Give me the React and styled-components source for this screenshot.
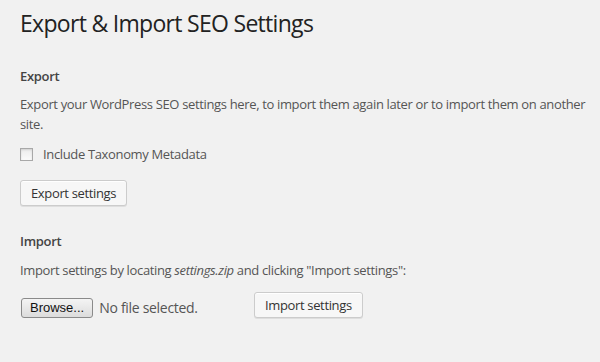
import React from 'react';
import styled, { createGlobalStyle } from 'styled-components';

const GlobalStyle = createGlobalStyle`
  html, body {
    margin: 0;
    padding: 0;
    background: #f1f1f1;
  }
  body {
    font-family: "Open Sans", "Liberation Sans", sans-serif;
    color: #444;
    font-size: 13px;
  }
`;

const Wrap = styled.div`
  padding: 9px 20px 0 20px;
  width: 600px;
  height: 362px;
  box-sizing: border-box;
  overflow: hidden;
`;

const Title = styled.h1`
  margin: 0;
  font-size: 23px;
  font-weight: 400;
  line-height: 29px;
  letter-spacing: -0.7px;
  color: #222;
`;

const SectionHead = styled.h3`
  margin: ${p => p.$top || 25}px 0 0 0;
  font-size: 13px;
  font-weight: 600;
  line-height: 20px;
  letter-spacing: -0.3px;
  color: #444;
`;

const Text = styled.p`
  margin: ${p => p.$top || 10}px 0 0 0;
  font-size: 13px;
  line-height: 20px;
  letter-spacing: -0.35px;
  color: #555;
  width: 570px;

  em {
    font-style: italic;
  }
`;

const CheckRow = styled.label`
  display: flex;
  align-items: center;
  gap: 10px;
  margin-top: 10px;
  font-size: 13px;
  line-height: 20px;
  letter-spacing: -0.35px;
  color: #555;
`;

const Check = styled.input`
  appearance: none;
  margin: 0;
  width: 13px;
  height: 13px;
  background: linear-gradient(#ececec, #fafafa);
  border: 1px solid #a8a8a8;
  box-shadow: inset 0 1px 2px rgba(0, 0, 0, 0.12);
  box-sizing: border-box;
`;

const Button = styled.button`
  display: inline-block;
  font-family: "Open Sans", "Liberation Sans", sans-serif;
  font-size: 13px;
  letter-spacing: -0.35px;
  line-height: 23px;
  height: 26px;
  padding: 0 10px;
  color: #333;
  background: #f7f7f7;
  border: 1px solid #ccc;
  border-radius: 3px;
  box-shadow: inset 0 1px 0 #fff, 0 1px 0 rgba(0, 0, 0, 0.08);
  box-sizing: border-box;
`;

const ExportButton = styled(Button)`
  margin-top: 16px;
`;

const UploadRow = styled.div`
  display: flex;
  align-items: center;
  margin-top: 12px;
`;

const FileField = styled.div`
  display: flex;
  align-items: center;
  width: 234px;
  gap: 6px;
`;

const Browse = styled.span`
  display: inline-block;
  height: 20px;
  line-height: 18px;
  padding: 0 8px;
  box-sizing: border-box;
  font-family: "Liberation Sans", Arial, sans-serif;
  font-size: 13px;
  color: #111;
  background: linear-gradient(#f4f4f4, #dcdcdc);
  border: 1px solid #8a8a8a;
  border-radius: 3px;
  margin-left: 1px;
  margin-top: 5px;
`;

const FileName = styled.span`
  font-size: 14px;
  letter-spacing: -0.3px;
  color: #555;
  margin-top: 5px;
`;

export default function App() {
  return (
    <>
      <GlobalStyle />
      <Wrap>
        <Title>Export &amp; Import SEO Settings</Title>

        <SectionHead $top={28}>Export</SectionHead>
        <Text $top={8}>
          Export your WordPress SEO settings here, to import them again later or to import them on another site.
        </Text>
        <CheckRow>
          <Check type="checkbox" />
          Include Taxonomy Metadata
        </CheckRow>
        <ExportButton>Export settings</ExportButton>

        <SectionHead $top={25}>Import</SectionHead>
        <Text $top={9}>
          Import settings by locating <em>settings.zip</em> and clicking "Import settings":
        </Text>
        <UploadRow>
          <FileField>
            <Browse>Browse...</Browse>
            <FileName>No file selected.</FileName>
          </FileField>
          <Button>Import settings</Button>
        </UploadRow>
      </Wrap>
    </>
  );
}
